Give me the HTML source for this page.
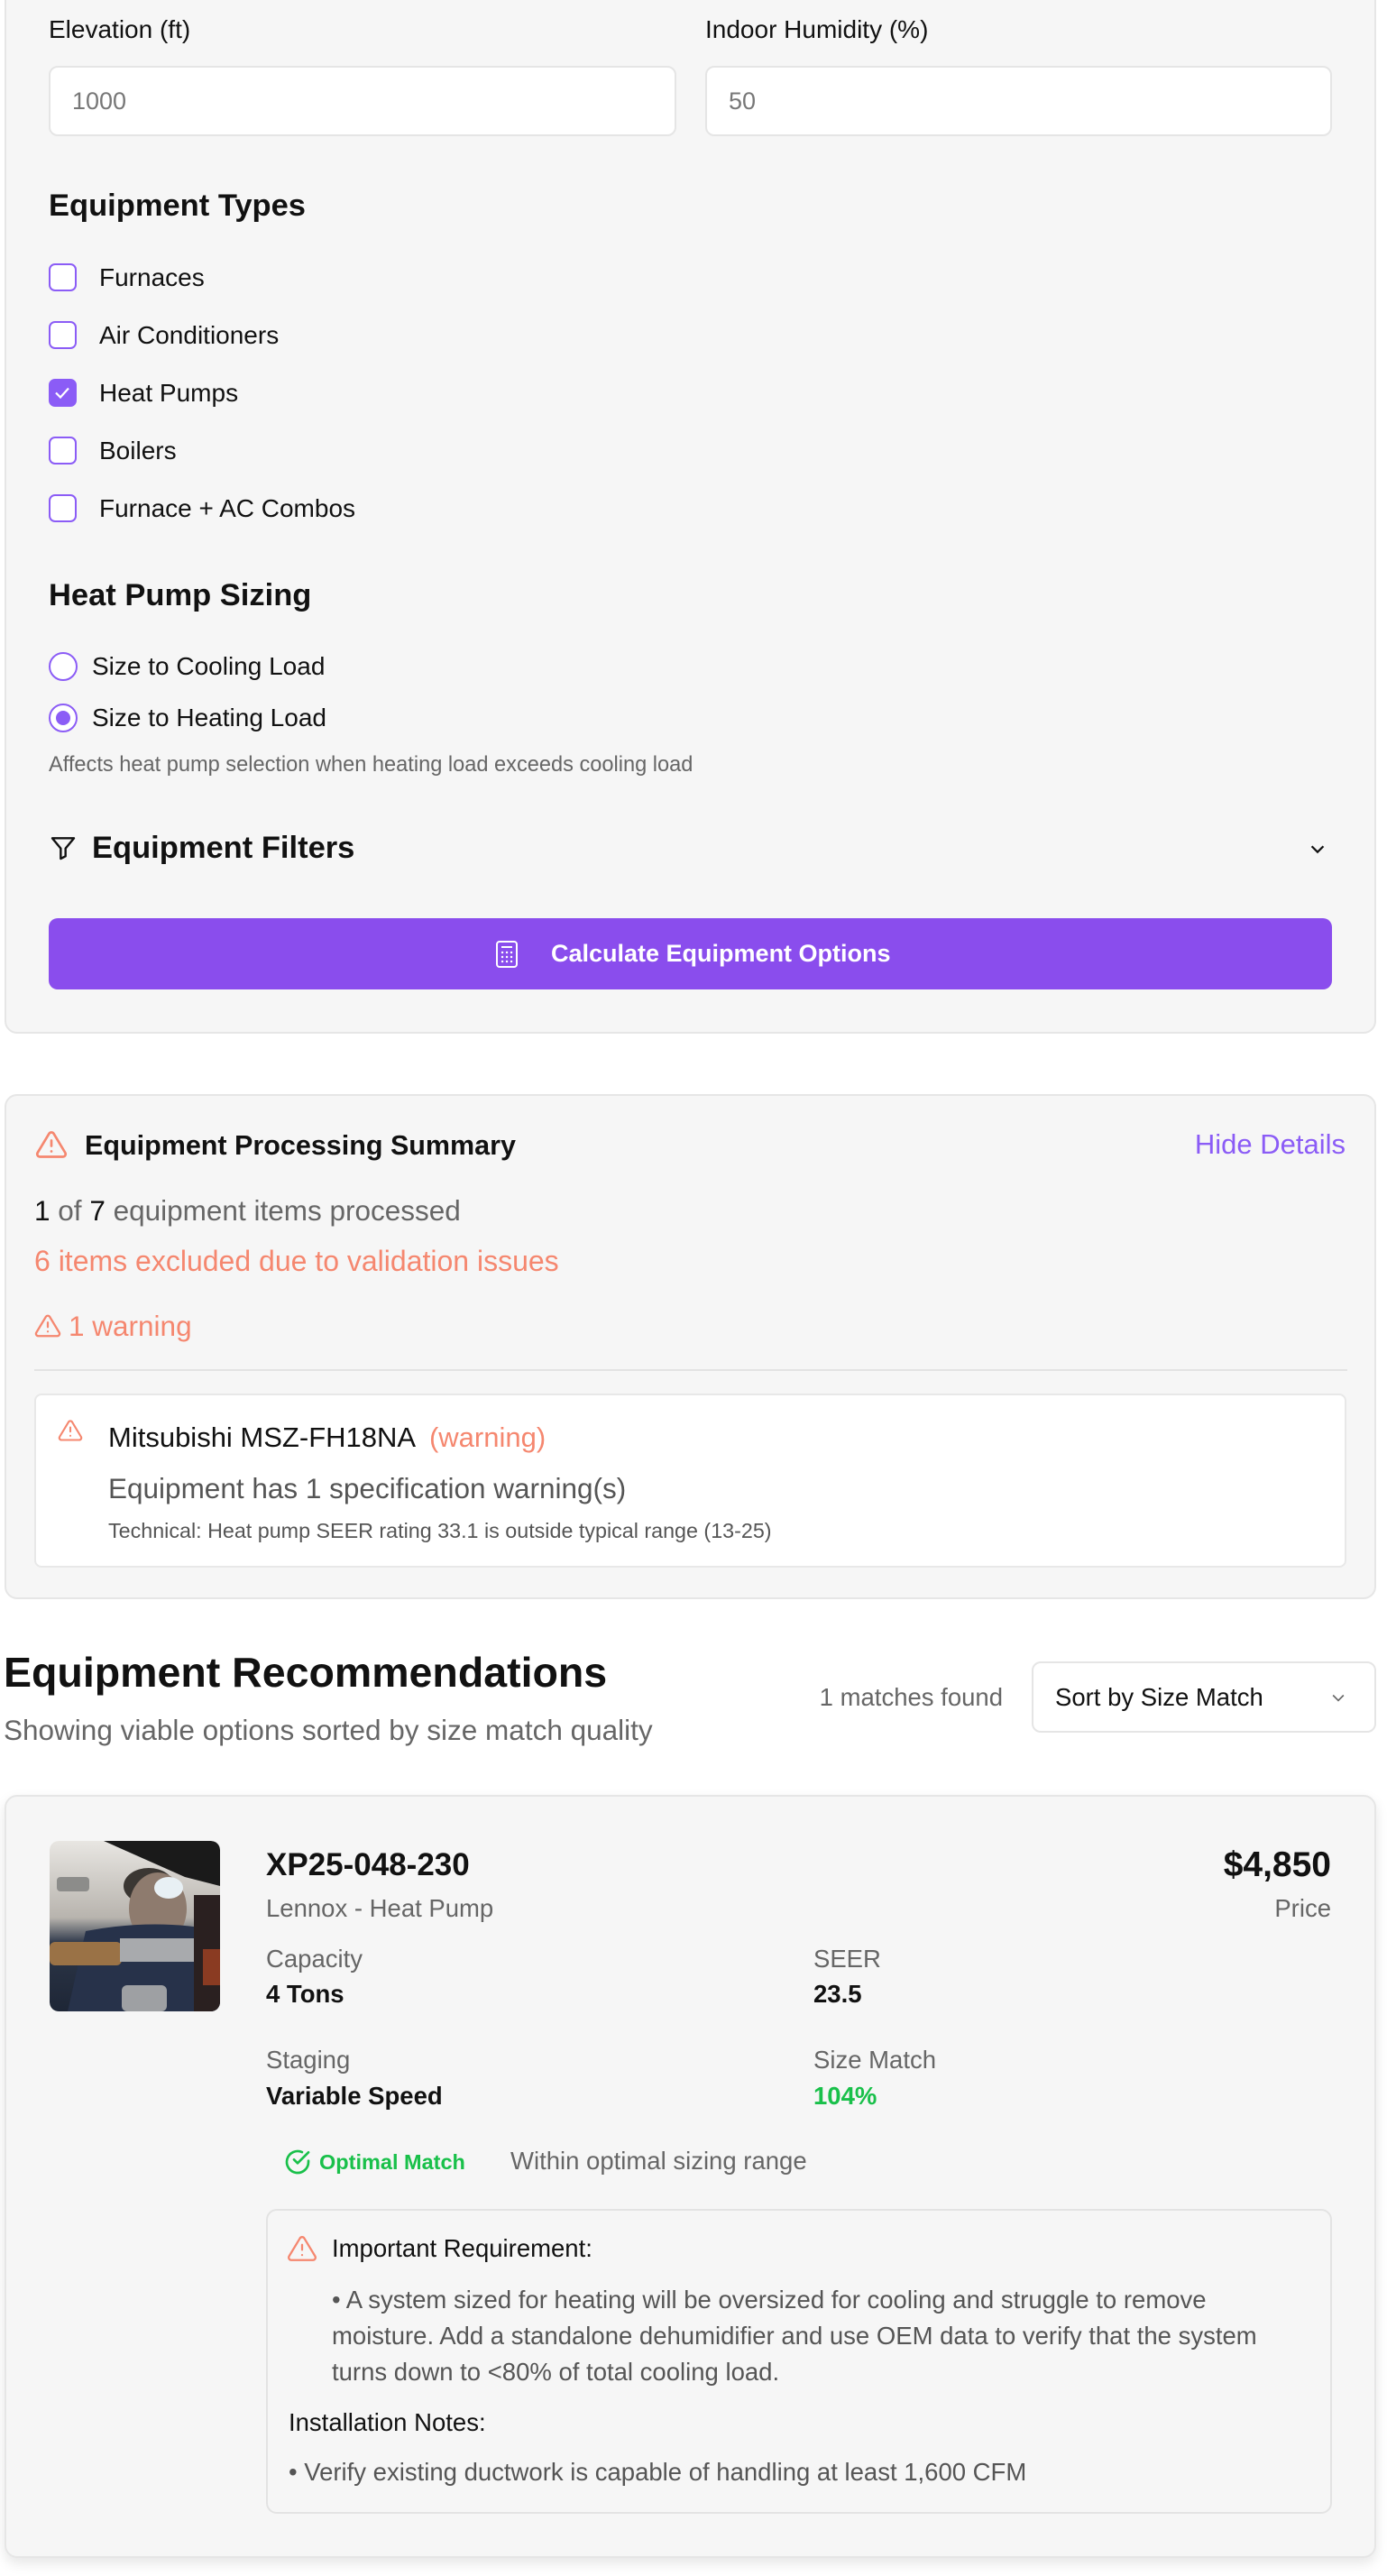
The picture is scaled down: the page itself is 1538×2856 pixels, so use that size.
<!DOCTYPE html>
<html><head><meta charset="utf-8"><style>
*{margin:0;padding:0;box-sizing:border-box}
body{width:1538px;height:2856px;background:#fff;font-family:"Liberation Sans",Arial,sans-serif;color:#111;position:relative;overflow:hidden}
.a{position:absolute;white-space:nowrap}
.card{position:absolute;background:#f6f6f6;border:2px solid #e6e6e6;border-radius:14px}
.inp{position:absolute;background:#fff;border:2px solid #e5e5e5;border-radius:10px;height:78px;top:73px;font-size:27px;color:#777;padding-left:24px;line-height:74px}
.cb{position:absolute;left:54px;width:31px;height:31px;border:2.5px solid #8b5cf6;border-radius:7px;background:#fff}
.lbl{font-size:28px;color:#111;left:110px;line-height:32px}
.rd{position:absolute;left:54px;width:32px;height:32px;border:2.5px solid #8b5cf6;border-radius:50%;background:#fff}
.gray{color:#666}
.sal{color:#f5876f}
</style></head><body>

<!-- Card 1 -->
<div class="card" style="left:5px;top:-20px;width:1521px;height:1166px"></div>
<div class="a" style="left:54px;top:16px;font-size:28px;line-height:34px">Elevation (ft)</div>
<div class="a" style="left:782px;top:16px;font-size:28px;line-height:34px">Indoor Humidity (%)</div>
<div class="inp" style="left:54px;width:696px">1000</div>
<div class="inp" style="left:782px;width:695px">50</div>

<div class="a" style="left:54px;top:207px;font-size:34.5px;font-weight:600;line-height:42px">Equipment Types</div>
<div class="cb" style="top:292px"></div><div class="a lbl" style="top:292px">Furnaces</div>
<div class="cb" style="top:356px"></div><div class="a lbl" style="top:356px">Air Conditioners</div>
<div class="cb" style="top:420px;background:#8b5cf6"><svg width="26" height="26" viewBox="0 0 26 26" style="position:absolute;left:0;top:0"><path d="M6 13.5l5 5 9-10" stroke="#fff" stroke-width="2.2" fill="none"/></svg></div><div class="a lbl" style="top:420px">Heat Pumps</div>
<div class="cb" style="top:484px"></div><div class="a lbl" style="top:484px">Boilers</div>
<div class="cb" style="top:548px"></div><div class="a lbl" style="top:548px">Furnace + AC Combos</div>

<div class="a" style="left:54px;top:639px;font-size:34.5px;font-weight:600;line-height:42px">Heat Pump Sizing</div>
<div class="rd" style="top:723px"></div><div class="a" style="left:102px;top:723px;font-size:28px;line-height:32px">Size to Cooling Load</div>
<div class="rd" style="top:780px"><div style="position:absolute;left:6px;top:6px;width:16px;height:16px;border-radius:50%;background:#8b5cf6"></div></div><div class="a" style="left:102px;top:780px;font-size:28px;line-height:32px">Size to Heating Load</div>
<div class="a gray" style="left:54px;top:834px;font-size:23.6px;line-height:28px">Affects heat pump selection when heating load exceeds cooling load</div>

<svg class="a" style="left:54px;top:924px" width="32" height="32" viewBox="0 0 24 24" fill="none" stroke="#111" stroke-width="1.8" stroke-linejoin="round"><path d="M3 4h18l-7 8.5V19l-4 2v-8.5z"/></svg>
<div class="a" style="left:102px;top:920px;font-size:34.5px;font-weight:600;line-height:40px">Equipment Filters</div>
<svg class="a" style="left:1450px;top:930px" width="22" height="22" viewBox="0 0 24 24" fill="none" stroke="#111" stroke-width="2.5"><path d="M5 9l7 7 7-7"/></svg>

<div class="a" style="left:54px;top:1018px;width:1423px;height:79px;background:#8a4ded;border-radius:10px"></div>
<svg class="a" style="left:548px;top:1042px" width="28" height="32" viewBox="0 0 28 32" fill="none" stroke="#fff" stroke-width="2"><rect x="3" y="2" width="22" height="28" rx="3"/><path d="M8 8h12"/><g stroke-width="2.4" stroke-linecap="round"><path d="M9 14h.1M14 14h.1M19 14h.1M9 19h.1M14 19h.1M19 19h.1M9 24h.1M14 24h.1M19 24h.1"/></g></svg>
<div class="a" style="left:611px;top:1040px;font-size:27px;font-weight:600;color:#fff;line-height:34px">Calculate Equipment Options</div>

<!-- Card 2 -->
<div class="card" style="left:5px;top:1213px;width:1521px;height:560px"></div>
<svg class="a" style="left:38px;top:1251px" width="38" height="36" viewBox="0 0 24 24" fill="none" stroke="#f5876f" stroke-width="1.8" stroke-linecap="round" stroke-linejoin="round"><path d="M10.3 3.9L1.8 18a2 2 0 0 0 1.7 3h17a2 2 0 0 0 1.7-3L13.7 3.9a2 2 0 0 0-3.4 0z"/><path d="M12 9v4M12 17h.01"/></svg>
<div class="a" style="left:94px;top:1252px;font-size:30.5px;font-weight:600;line-height:36px">Equipment Processing Summary</div>
<div class="a" style="right:46px;top:1251px;font-size:31px;color:#8b5cf6;line-height:36px">Hide Details</div>
<div class="a gray" style="left:38px;top:1323px;font-size:31.5px;line-height:38px"><span style="color:#111">1</span> of <span style="color:#111">7</span> equipment items processed</div>
<div class="a sal" style="left:38px;top:1379px;font-size:32px;line-height:38px">6 items excluded due to validation issues</div>
<svg class="a" style="left:38px;top:1455px" width="30" height="30" viewBox="0 0 24 24" fill="none" stroke="#f5876f" stroke-width="1.8" stroke-linecap="round" stroke-linejoin="round"><path d="M10.3 3.9L1.8 18a2 2 0 0 0 1.7 3h17a2 2 0 0 0 1.7-3L13.7 3.9a2 2 0 0 0-3.4 0z"/><path d="M12 9v4M12 17h.01"/></svg>
<div class="a sal" style="left:76px;top:1451px;font-size:31.5px;line-height:38px">1 warning</div>
<div class="a" style="left:38px;top:1518px;width:1456px;height:2px;background:#e3e3e3"></div>
<div class="a" style="left:38px;top:1545px;width:1455px;height:193px;background:#fff;border:2px solid #e8e8e8;border-radius:8px"></div>
<svg class="a" style="left:64px;top:1572px" width="28" height="28" viewBox="0 0 24 24" fill="none" stroke="#f5876f" stroke-width="1.8" stroke-linecap="round" stroke-linejoin="round"><path d="M10.3 3.9L1.8 18a2 2 0 0 0 1.7 3h17a2 2 0 0 0 1.7-3L13.7 3.9a2 2 0 0 0-3.4 0z"/><path d="M12 9v4M12 17h.01"/></svg>
<div class="a" style="left:120px;top:1575px;font-size:31px;line-height:38px">Mitsubishi MSZ-FH18NA <span class="sal" style="margin-left:8px">(warning)</span></div>
<div class="a" style="left:120px;top:1631px;font-size:31.5px;line-height:38px;color:#555">Equipment has 1 specification warning(s)</div>
<div class="a" style="left:120px;top:1684px;font-size:23.3px;line-height:26px;color:#555">Technical: Heat pump SEER rating 33.1 is outside typical range (13-25)</div>

<!-- Recommendations header -->
<div class="a" style="left:4px;top:1826px;font-size:46.5px;font-weight:600;line-height:56px">Equipment Recommendations</div>
<div class="a gray" style="left:4px;top:1899px;font-size:31.5px;line-height:38px">Showing viable options sorted by size match quality</div>
<div class="a gray" style="right:426px;top:1865px;font-size:27.5px;line-height:34px">1 matches found</div>
<div class="a" style="left:1144px;top:1842px;width:382px;height:79px;background:#fff;border:2px solid #e5e5e5;border-radius:10px"></div>
<div class="a" style="left:1170px;top:1865px;font-size:27.5px;line-height:34px">Sort by Size Match</div>
<svg class="a" style="left:1474px;top:1872px" width="20" height="20" viewBox="0 0 24 24" fill="none" stroke="#666" stroke-width="2"><path d="M5 9l7 7 7-7"/></svg>

<!-- Card 3 -->
<div class="card" style="left:5px;top:1990px;width:1521px;height:846px;box-shadow:0 6px 14px rgba(0,0,0,0.10)"></div>
<svg class="a" style="left:55px;top:2041px;border-radius:10px" width="189" height="189" viewBox="0 0 189 189">
<defs><linearGradient id="g" x1="0" y1="0" x2="0" y2="1"><stop offset="0" stop-color="#e8e6e2"/><stop offset="0.45" stop-color="#b8b4ae"/><stop offset="0.6" stop-color="#2c3648"/><stop offset="1" stop-color="#1e2636"/></linearGradient><clipPath id="c"><rect width="189" height="189" rx="10"/></clipPath></defs>
<g clip-path="url(#c)">
<rect width="189" height="189" fill="url(#g)"/>
<path d="M60 0h129v50L150 40z" fill="#1a1a1a"/>
<ellipse cx="110" cy="50" rx="28" ry="20" fill="#3b3733"/>
<ellipse cx="120" cy="75" rx="32" ry="40" fill="#8e7b6e"/>
<ellipse cx="132" cy="52" rx="16" ry="12" fill="#e8f0f4"/>
<path d="M40 100 Q120 85 189 100 V189 H20z" fill="#27324a"/>
<rect x="0" y="112" width="80" height="26" rx="6" fill="#9a7246"/>
<rect x="78" y="108" width="92" height="26" fill="#a8aaad"/>
<rect x="80" y="160" width="50" height="29" rx="6" fill="#9ea0a3"/>
<rect x="160" y="60" width="29" height="129" fill="#2a2020"/>
<rect x="170" y="120" width="19" height="40" fill="#8a3b22"/>
<rect x="8" y="40" width="36" height="16" rx="4" fill="#8c8c8a"/>
</g></svg>
<div class="a" style="left:295px;top:2047px;font-size:35px;font-weight:600;line-height:42px">XP25-048-230</div>
<div class="a gray" style="left:295px;top:2099px;font-size:27.5px;line-height:34px">Lennox - Heat Pump</div>
<div class="a" style="right:62px;top:2045px;font-size:39px;font-weight:700;line-height:46px">$4,850</div>
<div class="a gray" style="right:62px;top:2099px;font-size:27.5px;line-height:34px">Price</div>
<div class="a gray" style="left:295px;top:2155px;font-size:27.5px;line-height:34px">Capacity</div>
<div class="a" style="left:295px;top:2194px;font-size:27.5px;font-weight:600;line-height:34px">4 Tons</div>
<div class="a gray" style="left:902px;top:2155px;font-size:27.5px;line-height:34px">SEER</div>
<div class="a" style="left:902px;top:2194px;font-size:27.5px;font-weight:600;line-height:34px">23.5</div>
<div class="a gray" style="left:295px;top:2267px;font-size:27.5px;line-height:34px">Staging</div>
<div class="a" style="left:295px;top:2307px;font-size:27.5px;font-weight:600;line-height:34px">Variable Speed</div>
<div class="a gray" style="left:902px;top:2267px;font-size:27.5px;line-height:34px">Size Match</div>
<div class="a" style="left:902px;top:2307px;font-size:27.5px;font-weight:600;line-height:34px;color:#19c04a">104%</div>
<svg class="a" style="left:314px;top:2381px" width="32" height="32" viewBox="0 0 24 24" fill="none" stroke="#19c04a" stroke-width="2" stroke-linecap="round" stroke-linejoin="round"><path d="M21 11v1a9 9 0 1 1-5.3-8.2"/><path d="M21 4L12 13l-3-3"/></svg>
<div class="a" style="left:354px;top:2382px;font-size:23.5px;font-weight:600;color:#19c04a;line-height:30px">Optimal Match</div>
<div class="a gray" style="left:566px;top:2379px;font-size:27.5px;line-height:34px">Within optimal sizing range</div>
<div class="a" style="left:295px;top:2449px;width:1182px;height:338px;border:2px solid #e3e3e3;border-radius:12px"></div>
<svg class="a" style="left:318px;top:2476px" width="34" height="34" viewBox="0 0 24 24" fill="none" stroke="#f5876f" stroke-width="1.6" stroke-linecap="round" stroke-linejoin="round"><path d="M10.3 3.9L1.8 18a2 2 0 0 0 1.7 3h17a2 2 0 0 0 1.7-3L13.7 3.9a2 2 0 0 0-3.4 0z"/><path d="M12 9v4M12 17h.01"/></svg>
<div class="a" style="left:368px;top:2476px;font-size:27.5px;font-weight:500;line-height:34px">Important Requirement:</div>
<div class="a" style="left:368px;top:2530px;font-size:27.5px;line-height:40px;color:#555;white-space:normal;width:1045px">• A system sized for heating will be oversized for cooling and struggle to remove moisture. Add a standalone dehumidifier and use OEM data to verify that the system turns down to &lt;80% of total cooling load.</div>
<div class="a" style="left:320px;top:2669px;font-size:27.5px;font-weight:500;line-height:34px">Installation Notes:</div>
<div class="a" style="left:320px;top:2724px;font-size:27.5px;line-height:34px;color:#555">• Verify existing ductwork is capable of handling at least 1,600 CFM</div>
</body></html>
